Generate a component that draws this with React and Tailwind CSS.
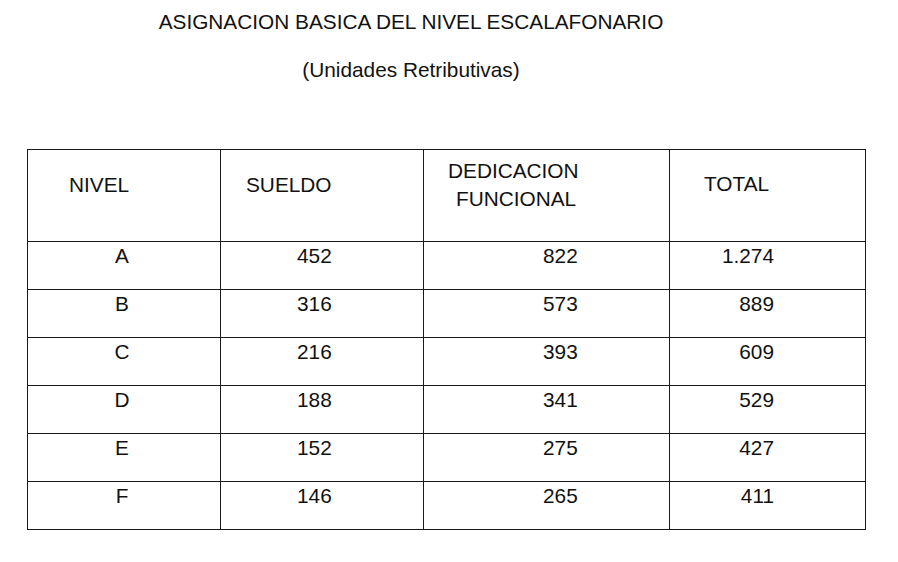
import React from "react";

const rows = [
  { nivel: "A", sueldo: "452", dedicacion: "822", total: "1.274" },
  { nivel: "B", sueldo: "316", dedicacion: "573", total: "889" },
  { nivel: "C", sueldo: "216", dedicacion: "393", total: "609" },
  { nivel: "D", sueldo: "188", dedicacion: "341", total: "529" },
  { nivel: "E", sueldo: "152", dedicacion: "275", total: "427" },
  { nivel: "F", sueldo: "146", dedicacion: "265", total: "411" },
];

const App = () => {
  return (
    <div
      className="w-[898px] h-[562px] bg-white text-[#111] overflow-hidden"
      style={{ fontFamily: '"Liberation Sans", Arial, sans-serif' }}
    >
      <div className="pt-[10px] w-[822px] text-center">
        <h1 className="text-[20.8px] leading-[24px] font-normal">
          ASIGNACION BASICA DEL NIVEL ESCALAFONARIO
        </h1>
        <p className="mt-[24px] text-[20.8px] leading-[24px]">
          (Unidades Retributivas)
        </p>
      </div>

      <div className="ml-[27px] mt-[67px] w-[839px] border-t border-l border-[#1a1a1a] text-[20.8px] leading-[24px]">
        <div className="grid grid-cols-[193px_203px_246px_196px] h-[92px] border-b border-[#1a1a1a]">
          <div className="border-r border-[#1a1a1a] pt-[23px] pl-[41px]">NIVEL</div>
          <div className="border-r border-[#1a1a1a] pt-[23px] pl-[25px]">SUELDO</div>
          <div className="border-r border-[#1a1a1a] pt-[7px] pl-[24px] leading-[28px]">
            <div>DEDICACION</div>
            <div className="pl-[8px]">FUNCIONAL</div>
          </div>
          <div className="border-r border-[#1a1a1a] pt-[22px] pl-[34px]">TOTAL</div>
        </div>

        {rows.map((row) => (
          <div
            key={row.nivel}
            className="grid grid-cols-[193px_203px_246px_196px] h-[48px] border-b border-[#1a1a1a]"
          >
            <div className="border-r border-[#1a1a1a] pt-[2px] pr-[4px] text-center">
              {row.nivel}
            </div>
            <div className="border-r border-[#1a1a1a] pt-[2px] pl-[76px]">{row.sueldo}</div>
            <div className="border-r border-[#1a1a1a] pt-[2px] pl-[119px]">{row.dedicacion}</div>
            <div className="border-r border-[#1a1a1a] pt-[2px] pr-[91px] text-right">
              {row.total}
            </div>
          </div>
        ))}
      </div>
    </div>
  );
};

export default App;
